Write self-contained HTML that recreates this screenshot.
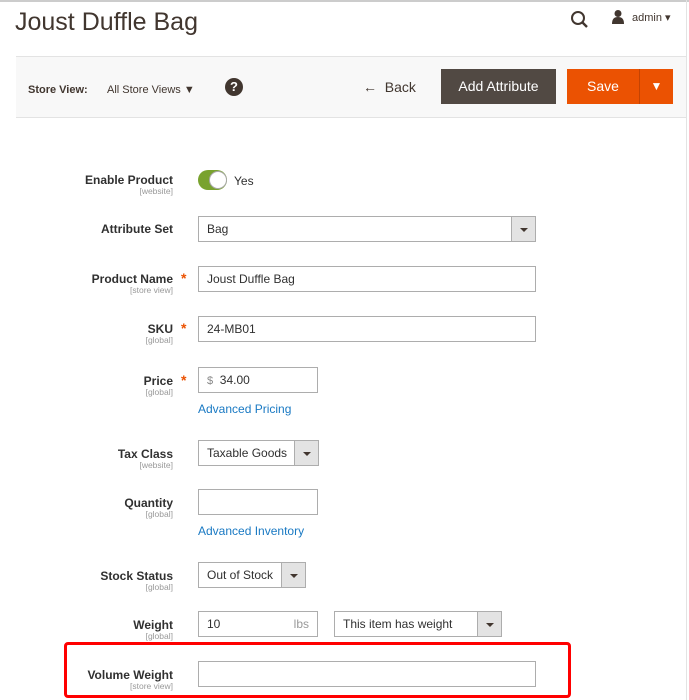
<!DOCTYPE html>
<html><head><style>
*{margin:0;padding:0;box-sizing:border-box}
body{width:689px;height:700px;overflow:hidden;background:#fff;font-family:"Liberation Sans",sans-serif;color:#303030;position:relative}
.a{position:absolute}
.lbl{position:absolute;right:516px;text-align:right;font-size:12px;font-weight:bold;color:#303030;line-height:13px}
.lbl small{display:block;font-size:8.5px;font-weight:normal;color:#999;line-height:9px}
.req{position:absolute;left:181px;color:#eb5202;font-size:14px;font-weight:bold}
.in{position:absolute;border:1px solid #adadad;background:#fff;height:26px;font-size:12px;line-height:24px;padding-left:8px;color:#303030}
.sel .ar{position:absolute;right:0;top:0;bottom:0;width:24px;background:#e3e3e3;border-left:1px solid #adadad}
.sel .ar:after{content:"";position:absolute;left:8px;top:11px;border:4px solid transparent;border-top:4px solid #41362f;border-bottom:0}
</style></head><body>
<div class="a" style="left:0;top:0;width:689px;height:2px;background:#ccc"></div>
<div class="a" style="left:686px;top:0;width:1px;height:700px;background:#e3e3e3"></div>
<div class="a" style="left:15px;top:8px;font-size:25px;color:#41362f">Joust Duffle Bag</div>
<svg class="a" style="left:570px;top:10px" width="20" height="20" viewBox="0 0 20 20"><circle cx="8" cy="8" r="6" fill="none" stroke="#41362f" stroke-width="2"/><path d="M12.5 12.5L17 17" stroke="#41362f" stroke-width="2.4"/></svg>
<svg class="a" style="left:610px;top:9px" width="16" height="16" viewBox="0 0 16 16"><circle cx="8" cy="4.5" r="3.5" fill="#41362f"/><path d="M2 15c0-5 2-7 6-7s6 2 6 7z" fill="#41362f"/></svg>
<div class="a" style="left:632px;top:11px;font-size:11px;color:#41362f">admin ▾</div>
<div class="a" style="left:16px;top:56px;width:670px;height:62px;background:#f8f8f8;border-top:1px solid #e3e3e3;border-bottom:1px solid #e3e3e3"></div>
<div class="a" style="left:28px;top:84px;font-size:11px;font-weight:bold;color:#41362f">Store View:</div>
<div class="a" style="left:107px;top:84px;font-size:11px;color:#41362f">All Store Views ▼</div>
<div class="a" style="left:225px;top:78px;width:18px;height:18px;border-radius:50%;background:#41362f;color:#fff;font-size:13px;font-weight:bold;text-align:center;line-height:18px">?</div>
<div class="a" style="left:363px;top:79px;font-size:14px;color:#41362f">←&nbsp;&nbsp;Back</div>
<div class="a" style="left:441px;top:69px;width:115px;height:35px;background:#514943;color:#fff;font-size:14px;line-height:35px;text-align:center">Add Attribute</div>
<div class="a" style="left:567px;top:69px;width:106px;height:35px;background:#eb5202;color:#fff;font-size:14px;line-height:35px"><span style="position:absolute;left:0;width:72px;text-align:center">Save</span><span style="position:absolute;left:72px;top:0;width:1px;height:35px;background:#c44302"></span><span style="position:absolute;left:73px;width:33px;text-align:center;font-size:12px">▼</span></div>

<div class="lbl" style="top:174px">Enable Product<small>[website]</small></div>
<div class="a" style="left:198px;top:170px;width:29px;height:20px;border-radius:10px;background:#79a22e"></div>
<div class="a" style="left:209px;top:171px;width:18px;height:18px;border-radius:50%;background:#fff;border:1px solid #aaa"></div>
<div class="a" style="left:234px;top:174px;font-size:12px">Yes</div>

<div class="lbl" style="top:223px">Attribute Set</div>
<div class="in sel" style="left:198px;top:216px;width:338px">Bag<div class="ar"></div></div>

<div class="lbl" style="top:273px">Product Name<small>[store view]</small></div><div class="req" style="top:270px">*</div>
<div class="in" style="left:198px;top:266px;width:338px">Joust Duffle Bag</div>

<div class="lbl" style="top:323px">SKU<small>[global]</small></div><div class="req" style="top:320px">*</div>
<div class="in" style="left:198px;top:316px;width:338px">24-MB01</div>

<div class="lbl" style="top:375px">Price<small>[global]</small></div><div class="req" style="top:372px">*</div>
<div class="in" style="left:198px;top:367px;width:120px"><span style="color:#888;font-size:11px">$</span>&nbsp;&nbsp;34.00</div>
<div class="a" style="left:198px;top:402px;font-size:12px;color:#1979c3">Advanced Pricing</div>

<div class="lbl" style="top:448px">Tax Class<small>[website]</small></div>
<div class="in sel" style="left:198px;top:440px;width:121px">Taxable Goods<div class="ar"></div></div>

<div class="lbl" style="top:497px">Quantity<small>[global]</small></div>
<div class="in" style="left:198px;top:489px;width:120px"></div>
<div class="a" style="left:198px;top:524px;font-size:12px;color:#1979c3">Advanced Inventory</div>

<div class="lbl" style="top:570px">Stock Status<small>[global]</small></div>
<div class="in sel" style="left:198px;top:562px;width:108px">Out of Stock<div class="ar"></div></div>

<div class="lbl" style="top:619px">Weight<small>[global]</small></div>
<div class="in" style="left:198px;top:611px;width:120px">10<span style="position:absolute;right:8px;color:#999">lbs</span></div>
<div class="in sel" style="left:334px;top:611px;width:168px">This item has weight<div class="ar"></div></div>

<div class="a" style="left:64px;top:642px;width:507px;height:56px;border:3px solid #f00;border-radius:4px"></div>
<div class="lbl" style="top:669px">Volume Weight<small>[store view]</small></div>
<div class="in" style="left:198px;top:661px;width:338px"></div>
</body></html>
